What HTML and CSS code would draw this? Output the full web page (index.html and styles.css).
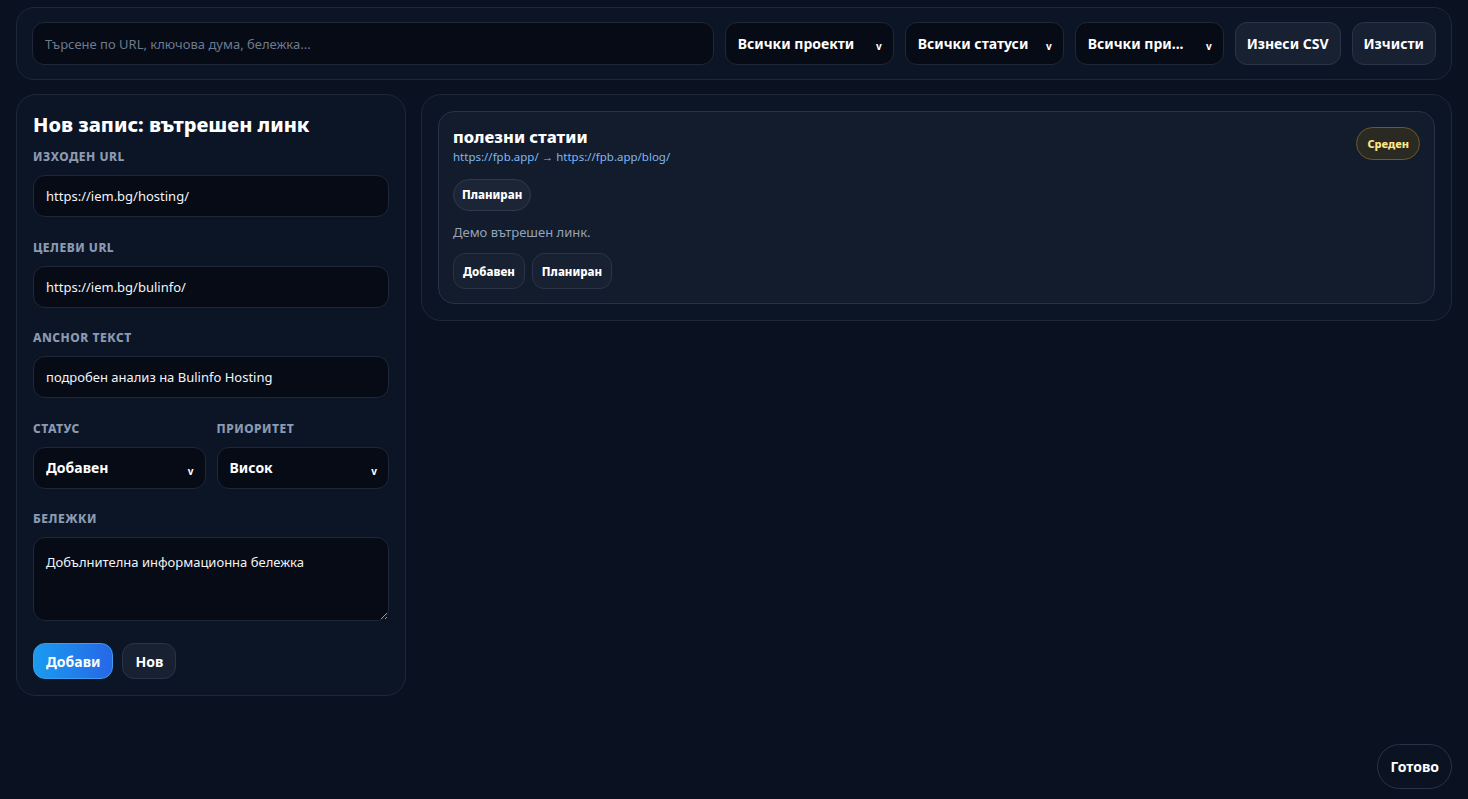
FILE: index.html
```html
<!DOCTYPE html>
<html lang="bg">
<head>
  <meta charset="UTF-8" />
  <meta name="viewport" content="width=device-width, initial-scale=1" />
  <title>Вътрешни линкове</title>
  <link rel="stylesheet" href="styles.css">
</head>
<body>

  <div class="toolbar">
    <input class="search" type="text" placeholder="Търсене по URL, ключова дума, бележка..." />
    <div class="select-wrap w-projects">
      <select><option>Всички проекти</option></select>
    </div>
    <div class="select-wrap w-statuses">
      <select><option>Всички статуси</option></select>
    </div>
    <div class="select-wrap w-prio">
      <select><option>Всички при...</option></select>
    </div>
    <button class="btn">Изнеси CSV</button>
    <button class="btn">Изчисти</button>
  </div>

  <div class="layout">
    <!-- Форма за нов запис -->
    <form class="panel form">
      <h2 class="form-title">Нов запис: вътрешен линк</h2>

      <label class="field-label">Изходен URL</label>
      <input class="field" type="text" value="https://iem.bg/hosting/" />

      <label class="field-label">Целеви URL</label>
      <input class="field" type="text" value="https://iem.bg/bulinfo/" />

      <label class="field-label">Anchor текст</label>
      <input class="field" type="text" value="подробен анализ на Bulinfo Hosting" />

      <div class="two-col">
        <div>
          <label class="field-label">Статус</label>
          <div class="select-wrap">
            <select><option>Добавен</option></select>
          </div>
        </div>
        <div>
          <label class="field-label">Приоритет</label>
          <div class="select-wrap">
            <select><option>Висок</option></select>
          </div>
        </div>
      </div>

      <label class="field-label">Бележки</label>
      <textarea class="field notes">Добълнителна информационна бележка</textarea>

      <div class="form-actions">
        <button type="button" class="btn primary">Добави</button>
        <button type="button" class="btn">Нов</button>
      </div>
    </form>

    <!-- Списък със записи -->
    <div class="panel list">
      <div class="card">
        <div class="card-head">
          <div>
            <h3 class="card-title">полезни статии</h3>
            <div class="card-link">https://fpb.app/ → https://fpb.app/blog/</div>
          </div>
          <span class="badge medium">Среден</span>
        </div>
        <span class="pill">Планиран</span>
        <p class="card-note">Демо вътрешен линк.</p>
        <div class="card-actions">
          <button class="btn small">Добавен</button>
          <button class="btn small">Планиран</button>
        </div>
      </div>
    </div>
  </div>

  <button class="btn done">Готово</button>

</body>
</html>
```

FILE: styles.css
```css
/* Основа */
html, body {
  margin: 0;
  padding: 0;
  background: #0a1221;
  color: #e5e9f0;
  font-family: "Noto Sans", "Open Sans", sans-serif;
  min-height: 100vh;
}
body {
  padding: 7px 16px 0 16px;
  box-sizing: border-box;
}
* { box-sizing: border-box; }

/* Горна лента с филтри */
.toolbar {
  display: flex;
  gap: 11px;
  align-items: center;
  padding: 14px 15px;
  border: 1px solid #1e2838;
  border-radius: 18px;
  background: #0c1525;
}
.search {
  flex: 1;
  height: 43px;
  background: #060b16;
  border: 1px solid #1e2838;
  border-radius: 12px;
  color: #e5e9f0;
  padding: 0 12px;
  font: 13px "Noto Sans", sans-serif;
  outline: none;
}
.search::placeholder { color: #6c7a90; }

.select-wrap {
  position: relative;
}
.select-wrap select {
  width: 100%;
  height: 42px;
  appearance: none;
  -webkit-appearance: none;
  background: #060b16;
  border: 1px solid #1e2838;
  border-radius: 12px;
  color: #fff;
  font: 700 14px "Noto Sans", sans-serif;
  padding: 0 28px 0 12px;
  outline: none;
}
.toolbar .select-wrap select { height: 43px; }
.select-wrap::after {
  content: "v";
  position: absolute;
  right: 12px;
  top: 17px;
  font: 700 10px "Noto Sans", sans-serif;
  color: #fff;
  pointer-events: none;
}
.w-projects { width: 169px; }
.w-statuses { width: 159px; }
.w-prio { width: 149px; }
.toolbar .btn { padding: 0 11px; }

/* Бутони */
.btn {
  height: 43px;
  padding: 0 12px;
  background: #182131;
  border: 1px solid #2a3446;
  border-radius: 12px;
  color: #fff;
  font: 700 14px "Noto Sans", sans-serif;
  cursor: pointer;
}
.btn.primary {
  background: linear-gradient(90deg, #1a9bf0, #2767e6);
  border-color: #3b9cf0;
}
.form-actions .btn { height: 36px; }

/* Основна решетка */
.layout {
  display: grid;
  grid-template-columns: 390px 1fr;
  gap: 15px;
  margin-top: 14px;
  align-items: start;
}
.panel {
  border: 1px solid #1e2838;
  border-radius: 20px;
  background: #0c1525;
  padding: 16px;
}

/* Форма */
.form {
  display: flex;
  flex-direction: column;
}
.form-title {
  margin: 0 0 11px 0;
  font-size: 20px;
  line-height: 27px;
  font-weight: 800;
  color: #fff;
}
.field-label {
  display: block;
  font-size: 12px;
  line-height: 16px;
  font-weight: 800;
  letter-spacing: 0.5px;
  text-transform: uppercase;
  color: #8a9ab2;
  margin: 0 0 10px 0;
}
.field {
  height: 42px;
  background: #060b16;
  border: 1px solid #1e2838;
  border-radius: 12px;
  color: #f2f4f8;
  font: 13px "Noto Sans", sans-serif;
  padding: 0 12px;
  margin-bottom: 22.5px;
  outline: none;
}
.two-col {
  display: grid;
  grid-template-columns: 1fr 1fr;
  gap: 11px;
  margin-bottom: 22.5px;
}
.notes {
  height: 84px;
  padding: 15px 12px;
  resize: vertical;
  margin-bottom: 22px;
}
.form-actions {
  display: flex;
  gap: 9px;
}

/* Списък */
.card {
  border: 1px solid #273246;
  border-radius: 16px;
  background: #131c2c;
  padding: 14px;
}
.card-head {
  display: flex;
  justify-content: space-between;
  align-items: flex-start;
}
.card-title {
  margin: 0 0 1px 0;
  font-size: 16.5px;
  line-height: 22px;
  font-weight: 800;
  color: #fff;
}
.card-link {
  font-size: 11.5px;
  line-height: 16px;
  color: #7fb6f2;
}
.badge {
  display: inline-block;
  padding: 8px 10px;
  border-radius: 999px;
  font-size: 11px;
  line-height: 15px;
  font-weight: 800;
}
.badge.medium {
  margin-top: 1px;
  background: #2b2a22;
  border: 1px solid #6a5a2c;
  color: #fde68a;
}
.pill {
  display: inline-block;
  margin-top: 14px;
  padding: 8px 8px;
  border-radius: 999px;
  border: 1px solid #2e394b;
  background: #1c2535;
  font-size: 11.5px;
  line-height: 14px;
  font-weight: 800;
  color: #fff;
}
.card-note {
  margin: 12px 0;
  font-size: 13px;
  line-height: 18px;
  color: #95a3b8;
}
.card-actions {
  display: flex;
  gap: 7px;
}
.btn.small {
  height: 36px;
  padding: 0 9px;
  font-size: 11.5px;
  font-weight: 800;
}

/* Плаващ бутон */
.done {
  position: fixed;
  right: 16px;
  bottom: 10px;
  height: 45px;
  padding: 0 12px;
  border-radius: 999px;
  background: #0b1322;
  border-color: #2a3446;
}
```
